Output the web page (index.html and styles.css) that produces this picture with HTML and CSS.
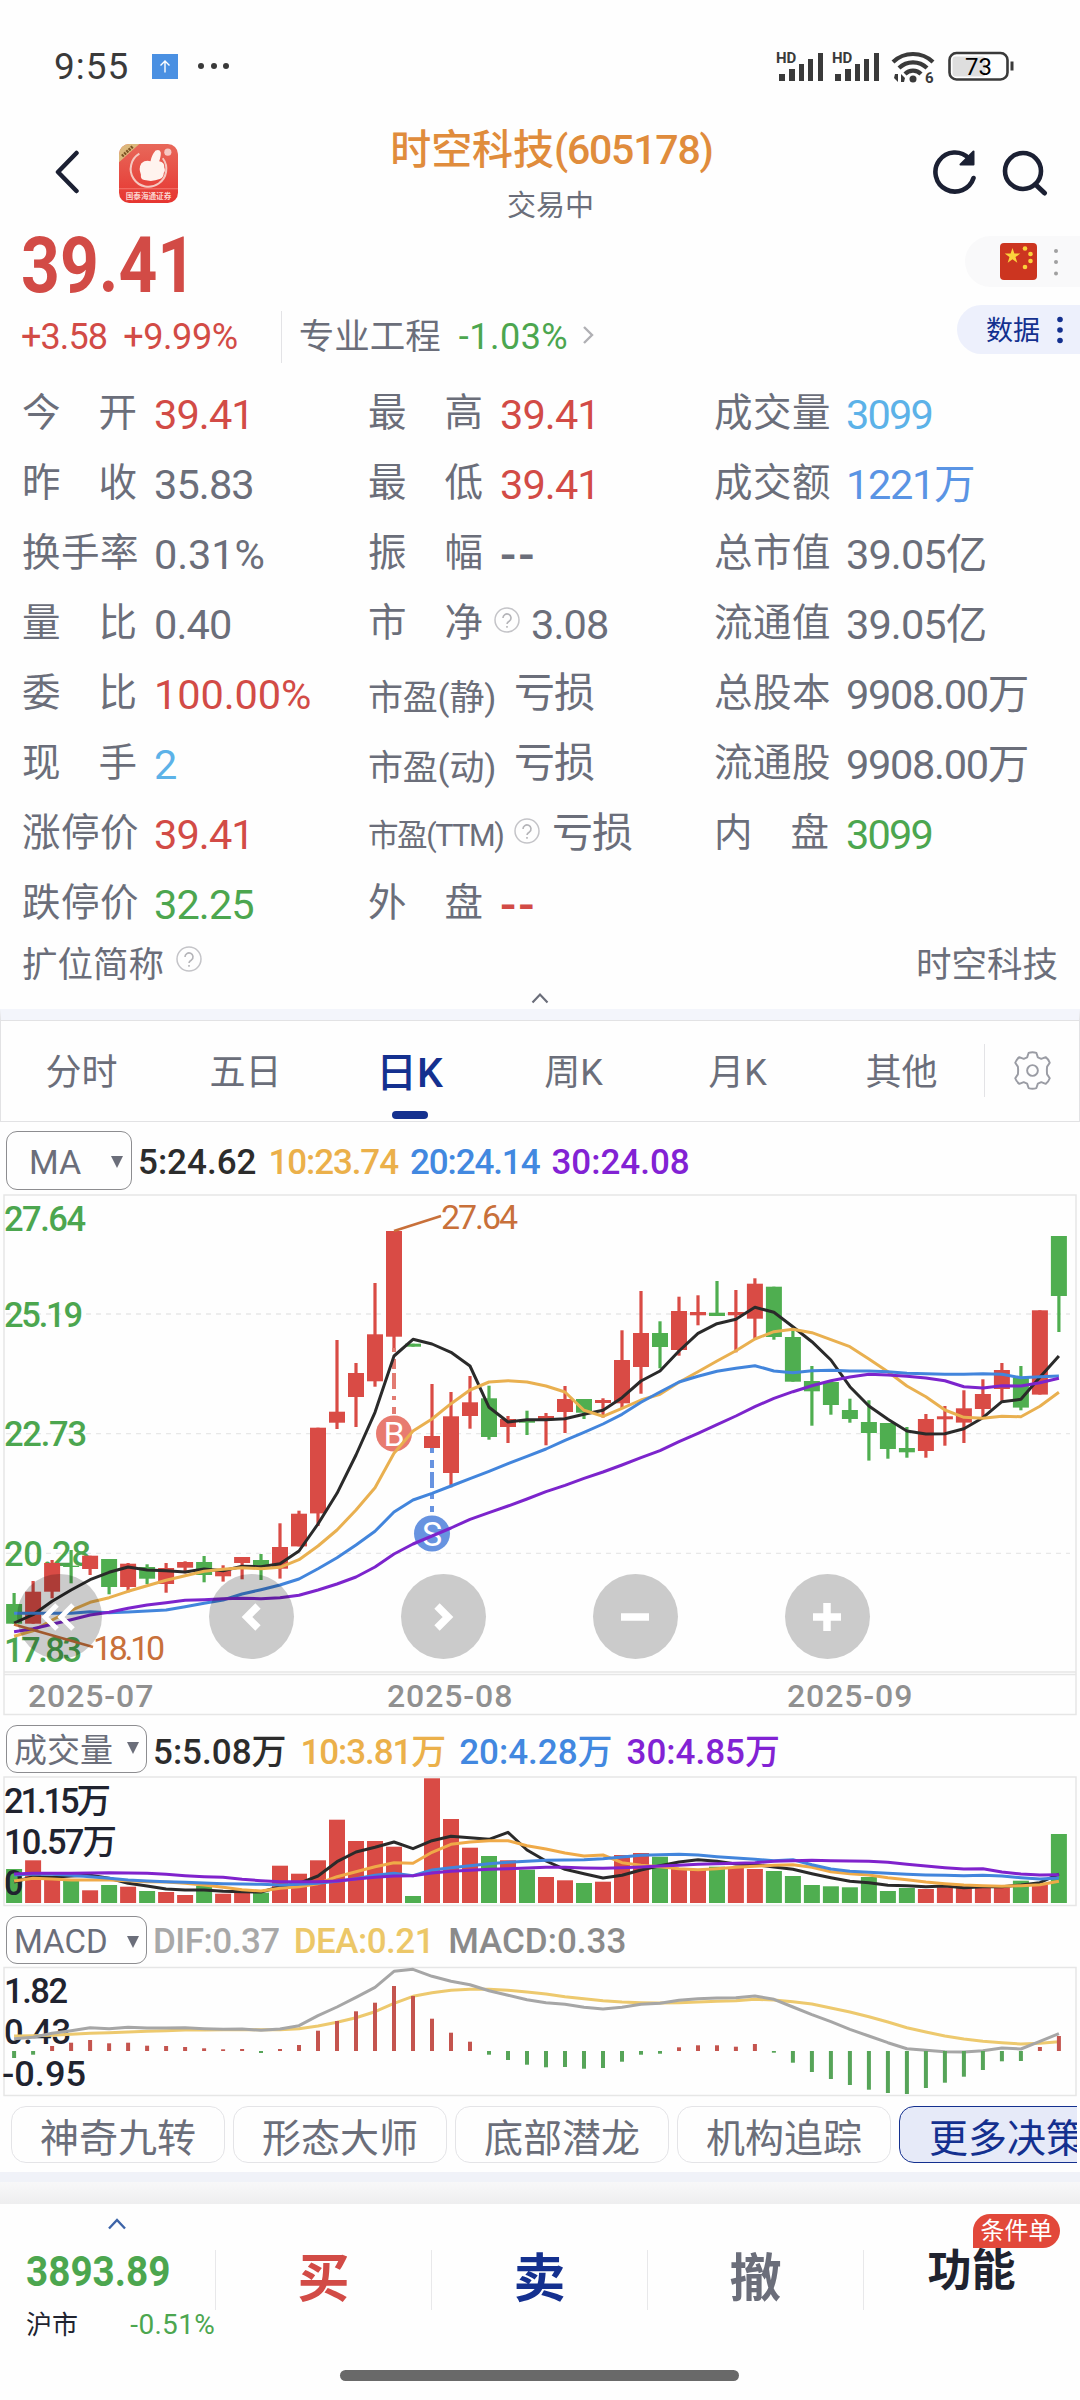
FILE: index.html
```
<!DOCTYPE html>
<html lang="zh-CN">
<head>
<meta charset="utf-8">
<title>时空科技(605178)</title>
<link rel="stylesheet" href="styles.css">
</head>
<body>
<div class="phone">
  <div class="status">
    <span class="time">9:55</span>
    <svg class="status-app" viewBox="0 0 26 25"><rect width="26" height="25" fill="#4a90e2"/><path d="M13 18.500V7M8.500 11.500L13 7l4.500 4.500" fill="none" stroke="#fff" stroke-width="1.400"/></svg>
    <svg class="status-dots" viewBox="0 0 32 6"><g fill="#3a3a3a"><circle cx="3" cy="3" r="3"/><circle cx="16" cy="3" r="3"/><circle cx="28" cy="3" r="3"/></g></svg>
    <svg class="status-right" viewBox="0 0 250 40">
      <g fill="#3a3a3a">
        <text class="hd" x="6" y="17">HD</text>
        <text class="hd" x="62" y="17">HD</text>
        <path d="M9 28h6v7h-6zM19 23h6v12h-6zM29 18h5v17h-5zM38 13h5v22h-5zM48 7h5v28h-5z"/>
        <path d="M65 28h6v7h-6zM75 23h6v12h-6zM85 18h5v17h-5zM94 13h5v22h-5zM104 7h5v28h-5z"/>
        <circle cx="143" cy="33" r="3.500"/>
        <path d="M125 28l3 0v8l-4-4zM134 36l-3 0v-8l4 4z"/>
        <text class="wifi6" x="155" y="37">6</text>
      </g>
      <g fill="none" stroke="#3a3a3a" stroke-width="4.200"><path d="M123 16a29 29 0 0 1 40 0M129 22a20 20 0 0 1 28 0M135 28a11 11 0 0 1 16 0"/></g>
      <rect x="182.500" y="10.500" width="33" height="20" rx="3" fill="#dedede"/>
      <rect x="179.500" y="7" width="58" height="26.500" rx="7" fill="none" stroke="#3a3a3a" stroke-width="2.600"/>
      <path d="M242 15.500v9" stroke="#3a3a3a" stroke-width="3"/>
      <text class="batt" x="208.500" y="28.500">73</text>
    </svg>
  </div>

  <header class="nav">
    <svg class="back" viewBox="0 0 26 44"><path d="M22.500 3L4 22l18.500 19" fill="none" stroke="#1b2033" stroke-width="4.500" stroke-linecap="round" stroke-linejoin="round"/></svg>
    <svg class="broker" viewBox="0 0 58 58">
      <defs><linearGradient id="bg" x1="0" y1="0" x2="0" y2="1"><stop offset="0" stop-color="#e8685a"/><stop offset="1" stop-color="#e63530"/></linearGradient><clipPath id="round"><rect width="58" height="58" rx="10"/></clipPath></defs>
      <g clip-path="url(#round)">
        <rect width="58" height="58" fill="url(#bg)"/>
        <path d="M0 0h20L0 18z" fill="#dcb87c"/>
        <path d="M3 12L14 2" stroke="#7b5424" stroke-width="3" stroke-dasharray="2 1"/>
        <path d="M20 9.500A17.500 17.500 0 1 0 43 14" fill="none" stroke="#f5c8c0" stroke-width="2"/>
        <path d="M31 17Q32 11 36 6.500 40 5 41 8 41.500 11 39.500 17 45 18 44.500 23 46 26 44 28.500 44 33 40 34.500 33 37.500 25 35.500 21 35 21.500 30 19 24 22 19 26 15.500 31 17z" fill="#fff3ee"/>
        <circle cx="48" cy="8" r="3.500" fill="#f7c8c3"/>
        <path d="M0 44h58" stroke="#f47a72"/>
        <text class="broker-name" x="29" y="54">国泰海通证券</text>
      </g>
    </svg>
    <div class="title">
      <h1>时空科技<span>(605178)</span></h1>
      <p>交易中</p>
    </div>
    <svg class="refresh" viewBox="0 0 46 46"><path d="M41.500 29A19.500 19.500 0 1 1 37 9.500" fill="none" stroke="#1b2033" stroke-width="4.600" stroke-linecap="round"/><path d="M41.500 2.500v13h-13z" fill="#1b2033" stroke="#1b2033" stroke-width="2" stroke-linejoin="round"/></svg>
    <svg class="search" viewBox="0 0 46 46"><circle cx="21" cy="21" r="18" fill="none" stroke="#1b2033" stroke-width="4.600"/><path d="M33.500 34.500L42.500 43" stroke="#1b2033" stroke-width="5" stroke-linecap="round"/></svg>
  </header>

  <section class="quote">
    <div class="quote-main">
      <div class="price red"><span>39.41</span></div>
      <div class="change">
        <span class="delta red">+3.58</span><span class="delta pct red">+9.99%</span>
        <span class="sector">专业工程</span><span class="delta wide green">-1.03%</span>
        <svg class="chev" viewBox="0 0 12 20"><path d="M2 2l8 8-8 8" fill="none" stroke="#b0b0b4" stroke-width="2.400"/></svg>
      </div>
    </div>
    <div class="pills">
      <div class="pill flag-pill">
        <svg class="flag" viewBox="0 0 37 37"><rect width="37" height="37" rx="4" fill="#cc3520"/><g fill="#fbd33c"><path d="M12.500 5l1.900 5.600h5.900l-4.800 3.500 1.800 5.700-4.800-3.500-4.800 3.500 1.800-5.700L4.700 10.600h5.900z"/><circle cx="25" cy="5.500" r="2.300"/><circle cx="30.500" cy="11" r="2.300"/><circle cx="30.500" cy="18" r="2.300"/><circle cx="25" cy="24" r="2.300"/></g></svg>
        <svg class="vdots" viewBox="0 0 6 28"><g fill="#a0a0a0"><circle cx="3" cy="3" r="2"/><circle cx="3" cy="14" r="2"/><circle cx="3" cy="25.500" r="2"/></g></svg>
      </div>
      <div class="pill data-pill"><span>数据</span>
        <svg class="vdots" viewBox="0 0 6 28"><g fill="#14308f"><circle cx="3" cy="3.500" r="2.800"/><circle cx="3" cy="14" r="2.800"/><circle cx="3" cy="24.500" r="2.800"/></g></svg>
      </div>
    </div>
  </section>

  <section class="stats">
    <div class="cell"><label>今 开</label><b class="red">39.41</b></div>
    <div class="cell"><label>最 高</label><b class="red">39.41</b></div>
    <div class="cell"><label>成 交 量</label><b class="int sky">3099</b></div>
    <div class="cell"><label>昨 收</label><b>35.83</b></div>
    <div class="cell"><label>最 低</label><b class="red">39.41</b></div>
    <div class="cell"><label>成 交 额</label><b class="large blue">1221万</b></div>
    <div class="cell"><label>换 手 率</label><b class="percent">0.31%</b></div>
    <div class="cell"><label>振 幅</label><b class="dash">--</b></div>
    <div class="cell"><label>总 市 值</label><b>39.05亿</b></div>
    <div class="cell"><label>量 比</label><b>0.40</b></div>
    <div class="cell"><label>市 净</label><svg class="help pb" viewBox="0 0 26 26"><use href="#help"/></svg><b>3.08</b></div>
    <div class="cell"><label>流 通 值</label><b>39.05亿</b></div>
    <div class="cell"><label>委 比</label><b class="percent red">100.00%</b></div>
    <div class="cell"><span class="pe">市盈(静)</span><b class="loss">亏损</b></div>
    <div class="cell"><label>总 股 本</label><b class="large">9908.00万</b></div>
    <div class="cell"><label>现 手</label><b class="sky">2</b></div>
    <div class="cell"><span class="pe">市盈(动)</span><b class="loss">亏损</b></div>
    <div class="cell"><label>流 通 股</label><b class="large">9908.00万</b></div>
    <div class="cell"><label>涨 停 价</label><b class="red">39.41</b></div>
    <div class="cell"><span class="pe ttm">市盈(TTM)</span><svg class="help" viewBox="0 0 26 26"><use href="#help"/></svg><b class="loss">亏损</b></div>
    <div class="cell"><label>内 盘</label><b class="int green">3099</b></div>
    <div class="cell"><label>跌 停 价</label><b class="green">32.25</b></div>
    <div class="cell"><label>外 盘</label><b class="dash red">--</b></div>
  </section>
  <div class="alias">
    <span>扩位简称</span>
    <svg class="help" viewBox="0 0 26 26"><g id="help"><circle cx="13" cy="13" r="12" fill="none" stroke="#c4c4c8" stroke-width="1.500"/><path d="M9 11a4 4 0 1 1 6.500 3q-2.500 1.500-2.500 3M13 19v1.800" fill="none" stroke="#b4b4b8" stroke-width="1.600"/></g></svg>
    <span class="alias-name">时空科技</span>
  </div>
  <div class="collapse"><svg viewBox="0 0 18 12"><path d="M1.500 10.500L9 2.500l7.500 8" fill="none" stroke="#6b6e7a" stroke-width="2.200"/></svg></div>

  <nav class="tabs">
    <span>分时</span><span>五日</span><span class="active">日K</span><span>周K</span><span>月K</span><span>其他</span>
    <div class="gear"><svg viewBox="-20 -20 40 40"><path fill="none" stroke="#9a9ca4" stroke-width="2" stroke-linejoin="round" d="M-4-18Q0-19.500 4-18L5.500-13.500 9-12 13.500-13.700Q16.500-11.500 17.700-8L15-4Q14.500 0 15 4L17.700 8Q16.500 11.500 13.500 13.700L9 12 5.500 13.500 4 18Q0 19.500-4 18L-5.500 13.500-9 12-13.500 13.700Q-16.500 11.500-17.700 8L-15 4Q-14.500 0-15-4L-17.700-8Q-16.500-11.500-13.500-13.700L-9-12-5.500-13.500Z"/><circle r="5.500" fill="none" stroke="#9a9ca4" stroke-width="2"/></svg></div>
  </nav>

  <div class="legend ma">
    <div class="select">MA<i></i></div>
    <span class="c5">5:24.62</span><span class="c10 tight">10:23.74</span><span class="c20 tight">20:24.14</span><span class="c30">30:24.08</span>
  </div>
  <div class="kchart">
    <svg class="chart" viewBox="0 0 1080 526">
      <path d="M4 5H1076V524.500H4ZM4 482H1076M4 484.500H1076" fill="none" stroke="#e6e6e6" stroke-width="1.500"/>
      <path d="M6 124H1070M6 243.700H1070M6 363.300H1070" stroke="#e8e8e8" stroke-width="1.300" stroke-dasharray="5 5"/>
      <g class="axis green-fill"><text x="4" y="41" textLength="82">27.64</text><text x="4" y="137" textLength="79">25.19</text><text x="4" y="256" textLength="83">22.73</text><text x="4" y="376" textLength="87">20.28</text><text x="4" y="471.500" textLength="78">17.83</text></g>
      <g id="candles"></g>
      <path d="M394 158V224" stroke="#e27b72" stroke-width="4" stroke-dasharray="4 7 10 4 16 7"/>
      <path d="M432 258V322" stroke="#6793e0" stroke-width="4" stroke-dasharray="5 7 8 4 16 6"/>
      <circle cx="394" cy="243.500" r="18" fill="#e87b70"/><text class="mark" x="394" y="255.500">B</text>
      <circle cx="432" cy="343.500" r="18" fill="#6793e0"/><text class="mark" x="432" y="355.500">S</text>
      <g id="ma-lines"></g>
      <g fill="none" stroke="#c8703a" stroke-width="2.800"><path d="M394 41L441 26"/><path d="M14 434.500L93 457"/></g>
      <g class="peak"><text x="441" y="39" textLength="77">27.64</text><text x="93" y="470" textLength="72">18.10</text></g>
      <g class="date"><text x="28" y="517">2025-07</text><text x="387" y="517">2025-08</text><text x="787" y="517">2025-09</text></g>
    </svg>
    <div class="controls">
      <button><svg viewBox="0 0 40 40"><path d="M18 8L6 20l12 12M34 8L22 20l12 12" stroke-width="5"/></svg></button>
      <button><svg viewBox="0 0 40 40"><path d="M27 9L16 20l11 11"/></svg></button>
      <button><svg viewBox="0 0 40 40"><path d="M14 9l11 11-11 11"/></svg></button>
      <button><svg viewBox="0 0 40 40"><path d="M6 20h28"/></svg></button>
      <button><svg viewBox="0 0 40 40"><path d="M6 20h28M20 6v28"/></svg></button>
    </div>
  </div>

  <div class="legend volume">
    <div class="select">成交量<i></i></div>
    <span class="c5">5:5.08万</span><span class="c10 tight">10:3.81万</span><span class="c20">20:4.28万</span><span class="c30">30:4.85万</span>
  </div>
  <svg class="sub" viewBox="0 0 1080 142">
    <path d="M4 7H1076V135.500H4Z" fill="none" stroke="#e6e6e6" stroke-width="1.500"/>
    <g id="vol-bars"></g>
    <g class="axis ink"><text x="4" y="42.500" textLength="107">21.15万</text><text x="4" y="83.500" textLength="113">10.57万</text><text x="4" y="125">0</text></g>
    <g id="vol-lines"></g>
  </svg>

  <div class="legend macd">
    <div class="select">MACD<i></i></div>
    <span class="dif">DIF:0.37</span><span class="dea">DEA:0.21</span><span class="mac">MACD:0.33</span>
  </div>
  <svg class="sub" viewBox="0 0 1080 142">
    <path d="M4 7.500H1076V135.500H4Z" fill="none" stroke="#e6e6e6" stroke-width="1.500"/>
    <g class="axis ink"><text x="4" y="43" textLength="64">1.82</text><text x="4" y="84" textLength="67">0.43</text><text x="2" y="126" textLength="84" lengthAdjust="spacingAndGlyphs">-0.95</text></g>
    <g id="macd-lines"></g>
    <g id="macd-bars"></g>
  </svg>

  <div class="chips"><span>神奇九转</span><span>形态大师</span><span>底部潜龙</span><span>机构追踪</span><span class="on">更多决策</span></div>
  <div class="shade"></div>

  <footer class="bar">
    <div class="index">
      <svg viewBox="0 0 20 12"><path d="M2 10.500l8-8.500 8 8.500" fill="none" stroke="#3d64a8" stroke-width="2.400"/></svg>
      <strong class="green">3893.89</strong>
      <div class="index-row"><span>沪市</span><em class="green">-0.51%</em></div>
    </div>
    <div class="act buy">买</div>
    <div class="act sell">卖</div>
    <div class="act undo">撤</div>
    <div class="act more">功能<span class="badge">条件单</span></div>
  </footer>
  <div class="home"></div>
</div>
<script src="chart.js"></script>
</body>
</html>
```
FILE: styles.css
```
* { box-sizing: border-box; }
body { margin: 0; background: #fefefe; color: #6b6e7a; font-family: Roboto, "Noto Sans CJK SC", sans-serif; }
svg { display: block; flex: none; }
.phone { width: 1080px; height: 2400px; overflow: hidden; display: flex; flex-direction: column; }
.phone > * { flex: none; }
.red { color: #d24b46; }
.green { color: #4ca64f; }
.sky { color: #5cb2e8; }
.blue { color: #5a94e4; }

.status { height: 130px; padding: 2px 60px 0 54px; display: flex; align-items: center; color: #3a3a3a; }
.time { font-size: 37px; width: 98px; letter-spacing: 1px; }
.status-app { width: 26px; height: 25px; }
.status-dots { width: 32px; height: 6px; margin-left: 20px; }
.status-right { width: 250px; height: 40px; margin-left: auto; }
.hd { font: 700 15px Roboto, sans-serif; }
.wifi6 { font: 700 15px Roboto, sans-serif; }
.batt { font: 400 24px Roboto, sans-serif; text-anchor: middle; }

.nav { height: 94px; display: flex; align-items: flex-start; padding: 0 32px 0 54px; }
.back { width: 26px; height: 44px; margin-top: 20px; }
.broker { width: 59px; height: 59px; margin: 14px 0 0 39px; }
.broker-name { font: 700 7.500px "Noto Sans CJK SC", sans-serif; fill: #fbd5d0; text-anchor: middle; }
.title { flex: 1; text-align: center; padding-left: 4px; margin-right: 10px; }
.title h1 { margin: -2px 0 0; font-size: 41px; line-height: 44px; font-weight: 500; letter-spacing: -.1px; color: #e08c3c; white-space: nowrap; }
.title h1 span { letter-spacing: -1.2px; }
.title p { margin: 14px 2px 0 0; font-size: 29px; line-height: 40px; }
.refresh { width: 46px; height: 46px; margin: 19px -1px 0 1px; }
.search { width: 46px; height: 46px; margin: 20px 0 0 25px; }

.quote { height: 153px; display: flex; justify-content: space-between; }
.price { height: 76px; padding: 4px 0 0 21px; font-size: 77px; line-height: 76px; font-weight: 700; }
.price span { display: inline-block; transform: scaleX(.88); transform-origin: 0 0; }
.change { display: flex; align-items: center; padding-left: 21px; height: 60px; margin-top: 7px; }
.delta { font-size: 36px; letter-spacing: -.9px; }
.pct { margin-left: 16px; letter-spacing: -.4px; }
.wide { letter-spacing: .5px; }
.sector { font-size: 35.500px; line-height: 52px; border-left: 1px solid #e3e3e6; margin-left: 43px; padding-left: 17px; margin-right: 18px; }
.chev { width: 12px; height: 20px; margin: -4px 0 0 14px; }
.pills { display: flex; flex-direction: column; align-items: flex-end; padding-top: 12px; gap: 18px; }
.pill { display: flex; align-items: center; border-radius: 26px 0 0 26px; }
.flag-pill { width: 115px; height: 51px; background: #f9f9fa; padding-left: 35px; gap: 16px; }
.flag { width: 37px; height: 37px; }
.vdots { width: 6px; height: 28px; }
.data-pill { width: 123px; height: 49px; background: #edf0fc; color: #14308f; font-size: 27px; padding-left: 29px; gap: 17px; }
.data-pill span { margin-top: -3px; }

.stats { display: grid; grid-template-columns: repeat(3, 346px); grid-auto-rows: 70px; padding: 3px 0 0 22px; height: 563px; }
.cell { display: flex; align-items: center; white-space: nowrap; }
.cell label { width: 115px; height: 56px; line-height: 56px; font-size: 38.500px; text-align: justify; text-align-last: justify; word-spacing: -9px; margin-right: 17px; margin-top: -4px; }
.cell b { font-weight: 400; font-size: 41.500px; line-height: 56px; letter-spacing: -.9px; }
.cell b.int { letter-spacing: -1.800px; }
.cell b.large { letter-spacing: -1.300px; }
.cell b.percent { letter-spacing: -.1px; }
.cell b.dash { letter-spacing: 2px; font-weight: 500; font-size: 48px; }
.cell .pe { width: 130px; font-size: 35px; letter-spacing: -.2px; margin-top: -2px; }
.cell .pe.ttm { font-size: 30.500px; width: 134px; letter-spacing: -1.400px; margin-top: -4px; }
.cell b.loss { margin: -4px 0 0 16px; font-size: 41px; letter-spacing: -1px; }
.cell .help { margin: -8px 0 0 12px; }
.help { width: 26px; height: 26px; }
.cell .help.pb { margin: -10px 11px 0 -6px; }
.cell .help + .loss { margin-left: 12px; }
.alias { height: 48px; display: flex; align-items: center; padding: 0 22px; margin-top: -3px; font-size: 35.500px; }
.alias .help { margin: -4px 0 0 12px; }
.alias-name { margin-left: auto; }
.collapse { height: 24px; padding-top: 7px; }
.collapse svg { width: 18px; height: 12px; margin: 0 auto; }

.tabs { height: 113px; border: 1px solid #e2e2e4; border-top: 11px solid #f3f5fb; box-shadow: inset 0 1px #e2e2e4; display: flex; }
.tabs > span { width: 164px; display: flex; align-items: center; justify-content: center; font-size: 36px; padding: 0 3px 3px 0; }
.tabs .active { position: relative; color: #14308f; font-size: 41px; font-weight: 500; }
.tabs .active::after { content: ""; position: absolute; left: 63px; bottom: 2px; width: 36px; height: 8px; border-radius: 4px; background: #14308f; }
.gear { flex: 1; height: 53px; margin: 24px 0 0 -1px; border-left: 1px solid #e3e3e6; display: flex; align-items: center; justify-content: center; }
.gear svg { width: 39px; height: 39px; }

.legend { height: 48px; display: flex; align-items: center; padding-left: 6px; font-size: 35px; font-weight: 500; white-space: nowrap; }
.legend span { margin-right: 14px; }
.legend .tight { letter-spacing: -1.100px; }
.select { width: 141px; height: 48px; flex: none; border: 1.500px solid #8d8d90; border-radius: 11px; display: flex; align-items: center; justify-content: space-between; padding: 0 7px; font-size: 33px; font-weight: 400; margin-right: 6px; }
.select i { width: 0; height: 0; border: 6.500px solid transparent; border-top: 12px solid #6b6e7a; border-bottom: 0; }
.ma { height: 60px; margin-top: 8px; }
.ma .select { width: 126px; height: 59px; padding: 4px 8px 0 22px; margin-right: 6px; font-size: 34px; }
.ma span { margin-right: 12px; padding-top: 5px; }
.volume { margin: 9px 0 -3px; }
.volume .select { padding-bottom: 2px; }
.volume span { margin-top: -2px; }
.macd { margin: 4px 0 -4px; }
.macd span { letter-spacing: -.5px; padding-top: 3px; }
.macd .mac { letter-spacing: 0; }
.macd .select { padding-top: 3px; }
.c5 { color: #2c2c2c; } .c10 { color: #ebb04a; } .c20 { color: #4288e0; } .c30 { color: #8222d4; }
.dif { color: #a8a8a8; } .dea { color: #ecc768; } .mac { color: #8a8a8a; }

.kchart { position: relative; height: 526px; }
.chart { width: 1080px; height: 526px; }
.axis { font: 500 34.500px Roboto, "Noto Sans CJK SC", sans-serif; }
.green-fill { fill: #4ca64f; }
.ink { fill: #20232f; }
.peak { font: 400 34px Roboto, sans-serif; fill: #c8703a; }
.date { font: 500 32px Roboto, sans-serif; fill: #909090; letter-spacing: .9px; }
.mark { font: 400 34px Roboto, sans-serif; fill: #fff; text-anchor: middle; }
.controls { position: absolute; left: 17px; top: 384px; display: flex; gap: 107.500px; }
.controls button { width: 84.500px; height: 85px; padding: 0; border: 0; border-radius: 50%; background: rgba(0, 0, 0, .2); display: flex; align-items: center; justify-content: center; }
.controls svg { width: 40px; height: 40px; fill: none; stroke: #fff; stroke-width: 7.500px; }
.sub { width: 1080px; height: 142px; }

.chips { display: flex; gap: 8px; margin: 4px 3px 9px 11px; overflow: hidden; }
.chips span { flex: none; width: 214px; height: 57px; border: 1.500px solid #e4e4e7; border-radius: 15px; display: flex; align-items: center; justify-content: center; font-size: 39px; }
.chips .on { background: #e6eaf8; border-color: #14308f; color: #14308f; width: 220px; justify-content: flex-start; padding-left: 29px; }
.shade { height: 32px; background: linear-gradient(#f0f2f8 0 10px, #f8f8f9 10px, #eeeeef); }

.bar { height: 162px; display: grid; grid-template-columns: repeat(5, 216px); }
.index { padding: 14px 0 0 26px; }
.index svg { width: 20px; height: 12px; margin-left: 81px; }
.index strong { display: block; font-size: 43px; line-height: 50px; margin-top: 16px; transform: scaleX(.9); transform-origin: 0 0; }
.index-row { display: flex; justify-content: space-between; font-size: 26px; line-height: 38px; margin-top: 10px; color: #20232f; padding-right: 1px; }
.index-row em { font-style: normal; font-size: 28px; letter-spacing: .3px; }
.act { height: 60px; margin: 46px 1px 0 -1px; border-left: 1px solid #e8e8ea; display: flex; align-items: center; justify-content: center; font-size: 52px; font-weight: 700; padding-bottom: 11px; }
.buy { color: #d24b46; } .sell { color: #14308f; }
.more { position: relative; font-size: 44px; color: #20232f; padding-bottom: 27px; }
.badge { position: absolute; right: 19px; top: -36px; width: 87px; height: 34px; border-radius: 17px 17px 17px 0; background: #e2483a; color: #fff; font-size: 24px; font-weight: 400; line-height: 34px; text-align: center; }
.home { width: 399px; height: 11px; border-radius: 6px; background: #696969; margin: 4px auto 0 340px; }
```
FILE: chart.js
```
// Chart data. Vertical values are stored at 3x density, top of each pane = 0.
const RED = '#d94b45', GREEN = '#4fae50';
const X0 = 14.1, STEP = 18.996;
const cx = i => X0 + STEP * i;
const rect = (x, y, w, h, fill) => `<rect x="${x.toFixed(1)}" y="${y.toFixed(1)}" width="${w}" height="${h.toFixed(1)}" fill="${fill}"/>`;
const line = (data, top, color, w = 3) =>
  `<polyline fill="none" stroke="${color}" stroke-width="${w}" stroke-linejoin="round" points="${data.map((v, i) => cx(i).toFixed(1) + ',' + ((v - top) / 3).toFixed(1)).join(' ')}"/>`;
const put = (id, html) => { document.getElementById(id).innerHTML = html; };

// direction, high, body top, body bottom, low
const candles = `G 1209 1242 1301 1301|R 1173 1205 1301 1301|R 1110 1119 1205 1225|G 1080 1127 1131 1180|R 1097 1097 1137 1155|G 1107 1107 1191 1213|R 1119 1121 1191 1207|G 1123 1131 1166 1182|R 1119 1134 1182 1208|R 1114 1116 1133 1150|G 1098 1116 1155 1177|R 1126 1140 1159 1175|R 1101 1101 1119 1168|G 1092 1110 1126 1170|R 1000 1071 1136 1166|R 962 971 1069 1069|R 713 713 970 1008|R 450 665 698 717|R 519 549 621 711|R 279 433 574 590|R 123 123 440 478|G 461 461 470 470|R 582 738 774 774|R 606 679 849 892|R 558 637 678 716|G 587 625 741 749|R 678 687 711 759|G 662 690 698 735|R 669 678 688 766|R 588 627 666 729|G 627 627 668 687|R 625 630 639 683|R 421 510 640 655|R 303 429 531 611|G 394 429 471 535|R 320 363 480 497|R 316 366 376 406|G 273 368 378 378|R 300 366 376 487|R 265 281 386 450|G 290 290 441 449|G 422 441 575 575|G 528 573 604 707|G 576 576 645 674|G 626 660 687 698|G 631 696 729 812|G 699 699 777 806|G 711 774 787 803|R 672 687 783 803|R 648 679 688 767|R 601 655 698 759|R 568 612 657 683|R 519 540 597 632|G 528 562 653 661|R 361 361 614 614|G 138 138 318 426`
  .split('|').map(s => s.split(' ').map((v, i) => i ? +v : v));

put('candles', candles.map(([d, h, a, b, l], i) => {
  const c = d === 'R' ? RED : GREEN;
  return rect(cx(i) - 1.6, h / 3, 3.2, (l - h) / 3, c) + rect(cx(i) - 8, a / 3, 16, (b - a) / 3, c);
}).join(''));

const ma5 = [1299,1274,1234,1200,1169,1147,1131,1140,1142,1146,1137,1142,1129,1130,1121,1083,1002,910,795,667,498,448,462,487,528,652,696,689,689,686,673,661,623,573,543,483,430,401,388,352,367,410,455,510,590,648,688,723,732,731,716,683,635,628,562,498];
const ma10 = [1339,1322,1290,1261,1237,1223,1204,1187,1171,1157,1144,1138,1133,1136,1132,1109,1068,1020,960,893,790,723,687,641,600,576,572,576,588,606,661,679,655,630,613,577,545,513,482,447,425,418,428,449,470,507,545,588,620,660,682,685,679,680,649,607];
const ma20 = [1270,1270,1270,1270,1265,1268,1266,1263,1260,1250,1240,1230,1212,1199,1185,1167,1136,1103,1065,1024,966,930,910,888,866,844,821,799,777,751,727,702,673,637,606,576,559,544,535,527,543,548,542,541,543,543,545,550,551,553,553,551,553,563,560,558];
const ma30 = [1325,1316,1303,1289,1275,1267,1255,1245,1238,1231,1229,1226,1225,1226,1223,1216,1200,1182,1161,1131,1092,1062,1038,1014,988,968,948,927,905,886,865,846,825,803,782,755,730,704,678,650,625,605,587,572,561,553,555,559,564,572,590,594,587,588,578,565];
put('ma-lines', line(ma5, 0, '#2a2a2a') + line(ma10, 0, '#e9b050') + line(ma20, 0, '#4285dc') + line(ma30, 0, '#7c24cc'));

const VOL_TOP = 150, VOL_BASE = 549;
const vol = [447,421,475,483,511,495,500,513,516,525,497,521,516,518,437,461,421,299,363,363,380,528,175,297,383,408,421,449,471,481,489,485,405,399,410,445,447,440,443,447,453,468,495,499,502,471,513,504,507,502,502,502,502,482,490,342];
put('vol-bars', vol.map((v, i) => rect(cx(i) - 8, (v - VOL_TOP) / 3, 16, (VOL_BASE - v) / 3, candles[i][0] === 'R' ? RED : GREEN)).join(''));
const v5 = [486,470,472,468,466,475,490,498,507,510,510,514,515,516,500,490,468,425,396,382,366,386,362,349,353,358,337,390,423,448,461,474,466,450,437,426,419,424,432,434,441,448,461,473,484,488,496,497,500,498,503,500,500,495,488,462];
const v10 = [483,475,477,480,480,480,482,485,486,490,495,502,509,513,505,500,491,470,455,440,428,430,397,373,366,362,362,377,387,399,408,405,428,436,440,446,449,446,442,439,436,434,442,455,461,465,473,479,486,491,495,497,499,497,494,484];
const v20 = [465,462,463,466,470,475,480,483,485,487,489,491,492,493,495,493,490,484,476,466,460,467,450,443,437,431,427,424,421,420,419,416,411,406,404,403,405,410,414,418,422,419,434,447,454,457,460,463,465,466,467,466,468,473,477,474];
const v30 = [462,460,460,460,459,458,459,460,463,467,470,472,478,482,485,485,485,483,477,472,468,467,459,454,451,448,446,444,442,442,444,445,443,441,438,436,433,431,430,428,424,422,421,422,423,424,427,433,438,443,447,446,456,462,465,464];
put('vol-lines', line(v5, VOL_TOP, '#2a2a2a') + line(v10, VOL_TOP, '#efaa48') + line(v20, VOL_TOP, '#4285dc') + line(v30, VOL_TOP, '#8022cc'));

const MACD_TOP = 720, ZERO = 993;
const macd = [1014,1004,978,968,960,970,968,977,978,981,985,988,987,999,987,975,932,903,874,848,798,828,896,938,965,1004,1020,1034,1042,1041,1046,1044,1025,1004,1001,982,976,976,980,972,998,1028,1056,1077,1095,1109,1119,1122,1104,1088,1070,1050,1024,1023,981,948];
put('macd-bars', macd.map((v, i) => rect(cx(i) - 2, (Math.min(v, ZERO) - MACD_TOP) / 3, 4, Math.abs(v - ZERO) / 3, v < ZERO ? '#c4544e' : '#56a458')).join(''));
const dif = [956,952,940,932,923,926,922,924,924,923,926,928,927,931,927,917,887,861,832,802,754,748,769,784,794,812,826,839,848,853,862,867,862,853,850,841,836,834,833,828,838,861,884,905,928,948,968,986,991,995,996,992,984,987,964,941];
const dea = [948,947,946,943,940,938,936,934,932,930,930,929,929,929,929,926,918,907,893,875,850,829,818,811,808,808,811,816,822,830,836,842,846,848,849,848,846,844,842,838,840,845,852,864,876,890,906,923,936,948,957,964,968,972,970,965];
put('macd-lines', line(dea, MACD_TOP, '#edc96e') + line(dif, MACD_TOP, '#a6a6a6'));
```
